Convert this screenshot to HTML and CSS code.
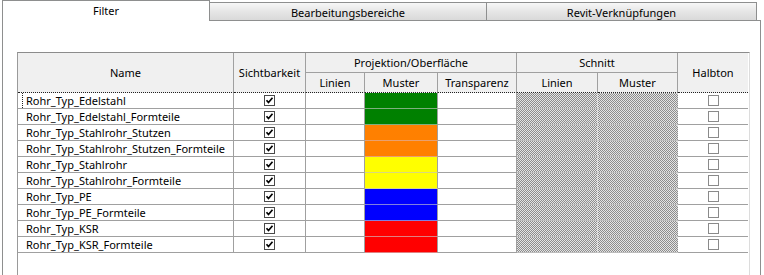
FILE: index.html
```html
<!DOCTYPE html>
<html lang="de">
<head>
  <meta charset="UTF-8">
  <title>Filter</title>
  <link rel="stylesheet" href="styles.css">
</head>
<body>
  <div class="tabs">
    <div class="tab active">Filter</div>
    <div class="tab tab-bb">Bearbeitungsbereiche</div>
    <div class="tab tab-rv">Revit-Verknüpfungen</div>
  </div>
  <div class="panel">
    <div class="grid-wrap">
      <div class="grid">
        <div class="hd span2">Name</div>
        <div class="hd span2">Sichtbarkeit</div>
        <div class="hd group proj">Projektion/Oberfläche</div>
        <div class="hd group schnitt">Schnitt</div>
        <div class="hd span2 last">Halbton</div>
        <div class="hd sub">Linien</div>
        <div class="hd sub">Muster</div>
        <div class="hd sub">Transparenz</div>
        <div class="hd sub">Linien</div>
        <div class="hd sub">Muster</div>

        <div class="c name"><span class="focus">Rohr_Typ_Edelstahl</span></div>
        <div class="c chk"><span class="box on"><svg width="9" height="9" viewBox="0 0 9 9"><path d="M1.5 4.2 L3.5 6.5 L7.5 1.8" /></svg></span></div>
        <div class="c"></div><div class="c fill green"></div><div class="c"></div>
        <div class="c hatch"></div><div class="c hatch"></div>
        <div class="c chk last"><span class="box"></span></div>

        <div class="c name">Rohr_Typ_Edelstahl_Formteile</div>
        <div class="c chk"><span class="box on"><svg width="9" height="9" viewBox="0 0 9 9"><path d="M1.5 4.2 L3.5 6.5 L7.5 1.8" /></svg></span></div>
        <div class="c"></div><div class="c fill green"></div><div class="c"></div>
        <div class="c hatch"></div><div class="c hatch"></div>
        <div class="c chk last"><span class="box"></span></div>

        <div class="c name">Rohr_Typ_Stahlrohr_Stutzen</div>
        <div class="c chk"><span class="box on"><svg width="9" height="9" viewBox="0 0 9 9"><path d="M1.5 4.2 L3.5 6.5 L7.5 1.8" /></svg></span></div>
        <div class="c"></div><div class="c fill orange"></div><div class="c"></div>
        <div class="c hatch"></div><div class="c hatch"></div>
        <div class="c chk last"><span class="box"></span></div>

        <div class="c name">Rohr_Typ_Stahlrohr_Stutzen_Formteile</div>
        <div class="c chk"><span class="box on"><svg width="9" height="9" viewBox="0 0 9 9"><path d="M1.5 4.2 L3.5 6.5 L7.5 1.8" /></svg></span></div>
        <div class="c"></div><div class="c fill orange"></div><div class="c"></div>
        <div class="c hatch"></div><div class="c hatch"></div>
        <div class="c chk last"><span class="box"></span></div>

        <div class="c name">Rohr_Typ_Stahlrohr</div>
        <div class="c chk"><span class="box on"><svg width="9" height="9" viewBox="0 0 9 9"><path d="M1.5 4.2 L3.5 6.5 L7.5 1.8" /></svg></span></div>
        <div class="c"></div><div class="c fill yellow"></div><div class="c"></div>
        <div class="c hatch"></div><div class="c hatch"></div>
        <div class="c chk last"><span class="box"></span></div>

        <div class="c name">Rohr_Typ_Stahlrohr_Formteile</div>
        <div class="c chk"><span class="box on"><svg width="9" height="9" viewBox="0 0 9 9"><path d="M1.5 4.2 L3.5 6.5 L7.5 1.8" /></svg></span></div>
        <div class="c"></div><div class="c fill yellow"></div><div class="c"></div>
        <div class="c hatch"></div><div class="c hatch"></div>
        <div class="c chk last"><span class="box"></span></div>

        <div class="c name">Rohr_Typ_PE</div>
        <div class="c chk"><span class="box on"><svg width="9" height="9" viewBox="0 0 9 9"><path d="M1.5 4.2 L3.5 6.5 L7.5 1.8" /></svg></span></div>
        <div class="c"></div><div class="c fill blue"></div><div class="c"></div>
        <div class="c hatch"></div><div class="c hatch"></div>
        <div class="c chk last"><span class="box"></span></div>

        <div class="c name">Rohr_Typ_PE_Formteile</div>
        <div class="c chk"><span class="box on"><svg width="9" height="9" viewBox="0 0 9 9"><path d="M1.5 4.2 L3.5 6.5 L7.5 1.8" /></svg></span></div>
        <div class="c"></div><div class="c fill blue"></div><div class="c"></div>
        <div class="c hatch"></div><div class="c hatch"></div>
        <div class="c chk last"><span class="box"></span></div>

        <div class="c name">Rohr_Typ_KSR</div>
        <div class="c chk"><span class="box on"><svg width="9" height="9" viewBox="0 0 9 9"><path d="M1.5 4.2 L3.5 6.5 L7.5 1.8" /></svg></span></div>
        <div class="c"></div><div class="c fill red"></div><div class="c"></div>
        <div class="c hatch"></div><div class="c hatch"></div>
        <div class="c chk last"><span class="box"></span></div>

        <div class="c name">Rohr_Typ_KSR_Formteile</div>
        <div class="c chk"><span class="box on"><svg width="9" height="9" viewBox="0 0 9 9"><path d="M1.5 4.2 L3.5 6.5 L7.5 1.8" /></svg></span></div>
        <div class="c"></div><div class="c fill red"></div><div class="c"></div>
        <div class="c hatch"></div><div class="c hatch"></div>
        <div class="c chk last"><span class="box"></span></div>
      </div>
    </div>
  </div>
</body>
</html>
```

FILE: styles.css
```css
html, body {
  margin: 0;
  padding: 0;
  overflow: hidden;
  background: #fff;
}
body {
  font-family: "Noto Sans", "Open Sans", Arial, sans-serif;
  font-size: 11px;
  color: #000;
}
.tabs {
  display: flex;
  align-items: flex-start;
  padding-left: 2px;
  height: 20px;
}
.tab {
  box-sizing: border-box;
  display: flex;
  align-items: center;
  justify-content: center;
  border-top: 1px solid #8e8f8f;
  border-right: 1px solid #8e8f8f;
  margin-top: 2px;
  height: 18px;
  background: linear-gradient(#f7f7f7, #e6e6e6 50%, #d9d9d9);
  padding-top: 1px;
}
.tab.active {
  position: relative;
  z-index: 1;
  margin-top: 0;
  width: 208px;
  height: 21px;
  border-left: 1px solid #8e8f8f;
  background: #fff;
  padding-top: 0;
  padding-bottom: 2px;
}
.tab-bb {
  width: 277px;
}
.tab-rv {
  width: 270px;
}
.panel {
  box-sizing: border-box;
  margin-left: 2px;
  width: 759px;
  height: 255px;
  border: 1px solid #8e8f8f;
  border-bottom: none;
  padding: 31px 0 0 14px;
  background: #fff;
}
.grid-wrap {
  width: 731px;
  height: 223px;
  border-top: 1px solid #8c8c8c;
  border-left: 1px solid #9a9a9a;
  border-right: 1px solid #dcdcdc;
}
.grid {
  display: grid;
  grid-template-columns: 216px 72px 59px 73px 79px 81px 80px 70px;
  grid-template-rows: 20px 20px repeat(10, 16px);
}
.hd {
  box-sizing: border-box;
  background: #f0f0f0;
  border-right: 1px solid #a0a0a0;
  border-bottom: 1px solid #a0a0a0;
  display: flex;
  align-items: center;
  justify-content: center;
  white-space: nowrap;
}
.hd.span2 {
  grid-row: span 2;
  border-bottom: 1px dotted #222;
}
.hd.proj {
  grid-column: span 3;
}
.hd.schnitt {
  grid-column: span 2;
}
.hd.sub {
  border-bottom: 1px dotted #222;
}
.hd.last, .c.last {
  border-right: none;
}
.c {
  box-sizing: border-box;
  border-right: 1px solid #a0a0a0;
  border-bottom: 1px solid #a0a0a0;
  background: #fff;
  white-space: nowrap;
  overflow: hidden;
}
.c.name {
  display: flex;
  align-items: center;
  padding-left: 8px;
}
.focus {
  border-left: 1px dotted #222;
  margin-left: -4px;
  padding-left: 3px;
}
.c.chk {
  display: flex;
  align-items: center;
  justify-content: center;
}
.box {
  box-sizing: border-box;
  width: 11px;
  height: 11px;
  border: 1px solid #8a8a8a;
  background: #fff;
  display: flex;
  align-items: center;
  justify-content: center;
}
.box.on {
  border-color: #4a4a4a;
}
.box svg path {
  fill: none;
  stroke: #000;
  stroke-width: 1.7;
}
.fill.green { background: #008000; border-bottom-color: #7fb07f; }
.fill.orange { background: #ff8000; border-bottom-color: #e8a070; }
.fill.yellow { background: #ffff00; border-bottom-color: #d8d880; }
.fill.blue { background: #0000ff; border-bottom-color: #8080e0; }
.fill.red { background: #ff0000; border-bottom-color: #e08080; }
.hatch {
  background: repeating-conic-gradient(#8c8c8c 0 25%, #e4e4e4 0 50%) 0 0 / 2px 2px;
  border-bottom-color: #bdbdbd;
  border-right: 1px dotted #d8d8d8;
}
```
